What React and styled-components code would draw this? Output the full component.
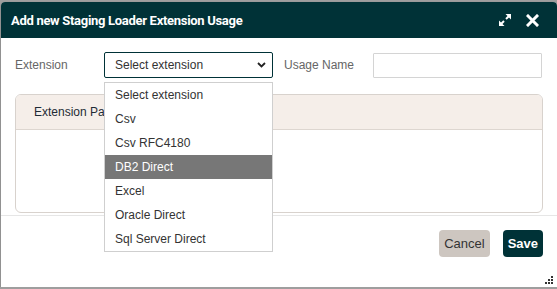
import React from "react";
import styled, { createGlobalStyle } from "styled-components";

const GlobalStyle = createGlobalStyle`
  html, body {
    margin: 0;
    padding: 0;
    background: #9e9e9e;
    overflow: hidden;
  }
  * { box-sizing: border-box; }
`;

const extensions = [
  "Select extension",
  "Csv",
  "Csv RFC4180",
  "DB2 Direct",
  "Excel",
  "Oracle Direct",
  "Sql Server Direct",
];

const ExpandIcon = () => (
  <svg width="14" height="14" viewBox="0 0 14 14">
    <polygon points="13,1 13,6.5 7.5,1" fill="#fff" />
    <line x1="11" y1="3" x2="8" y2="6" stroke="#fff" strokeWidth="2" />
    <polygon points="1,13 1,7.5 6.5,13" fill="#fff" />
    <line x1="3" y1="11" x2="6" y2="8" stroke="#fff" strokeWidth="2" />
  </svg>
);

const CloseIcon = () => (
  <svg width="13" height="13" viewBox="0 0 13 13">
    <path d="M2 2 L11 11 M11 2 L2 11" stroke="#fff" strokeWidth="3" strokeLinecap="square" />
  </svg>
);

const Chevron = () => (
  <svg width="9" height="6" viewBox="0 0 9 6">
    <polyline points="1,1 4.5,4.5 8,1" fill="none" stroke="#222" strokeWidth="1.8" />
  </svg>
);

const Grip = () => (
  <svg width="11" height="9" viewBox="0 0 11 9">
    <rect x="8" y="0" width="2" height="2" fill="#333" />
    <rect x="5" y="3" width="2" height="2" fill="#333" />
    <rect x="8" y="3" width="2" height="2" fill="#333" />
    <rect x="2" y="6" width="2" height="2" fill="#333" />
    <rect x="5" y="6" width="2" height="2" fill="#333" />
    <rect x="8" y="6" width="2" height="2" fill="#333" />
  </svg>
);

export default function App() {
  return (
    <>
      <GlobalStyle />
      <Dialog>
        <TitleBar>
          <Title>Add new Staging Loader Extension Usage</Title>
          <TitleActions>
            <IconButton><ExpandIcon /></IconButton>
            <IconButton><CloseIcon /></IconButton>
          </TitleActions>
        </TitleBar>

        <Body>
          <FormRow>
            <Label>Extension</Label>
            <SelectWrap>
              <SelectBox>
                <span>Select extension</span>
                <Chevron />
              </SelectBox>
              <OptionList>
                {extensions.map((name) => (
                  <Option key={name} $active={name === "DB2 Direct"}>{name}</Option>
                ))}
              </OptionList>
            </SelectWrap>
            <Label $offset>Usage Name</Label>
            <TextInput type="text" />
          </FormRow>

          <Panel>
            <PanelHeader>Extension Parameters</PanelHeader>
          </Panel>
        </Body>

        <Footer>
          <Button $variant="cancel">Cancel</Button>
          <Button $variant="save">Save</Button>
        </Footer>

        <ResizeGrip><Grip /></ResizeGrip>
      </Dialog>
    </>
  );
}

const Dialog = styled.div`
  position: relative;
  margin: 2px 0 0 1px;
  width: 556px;
  height: 285px;
  background: #fff;
  border-radius: 4px 4px 0 0;
  display: flex;
  flex-direction: column;
  font-family: "Liberation Sans", Arial, sans-serif;
  font-size: 12px;
  box-shadow: 0 1px 2px rgba(0, 0, 0, 0.3);
`;

const TitleBar = styled.div`
  height: 36px;
  flex-shrink: 0;
  display: flex;
  align-items: center;
  padding: 0 18px 0 10px;
  background: #003237;
  border-radius: 4px 4px 0 0;
  color: #fff;
`;

const Title = styled.div`
  font-family: Roboto, "Liberation Sans", sans-serif;
  font-weight: 700;
  font-size: 13px;
  letter-spacing: -0.3px;
`;

const TitleActions = styled.div`
  margin-left: auto;
  display: flex;
  align-items: center;
  gap: 14px;
`;

const IconButton = styled.span`
  display: flex;
  align-items: center;
  cursor: pointer;
`;

const Body = styled.div`
  padding: 14px 14px 2px;
`;

const FormRow = styled.div`
  display: flex;
  align-items: center;
  height: 26px;
`;

const Label = styled.label`
  width: 89px;
  margin-left: ${(p) => (p.$offset ? "11px" : "0")};
  color: #666;
`;

const SelectWrap = styled.div`
  position: relative;
  width: 169px;
`;

const SelectBox = styled.div`
  height: 26px;
  border: 1px solid #003237;
  border-radius: 2px;
  display: flex;
  align-items: center;
  justify-content: space-between;
  padding: 0 6px 0 10px;
  color: #333;
`;

const OptionList = styled.div`
  position: absolute;
  top: 30px;
  left: 0;
  width: 169px;
  background: #fff;
  border: 1px solid #cfcfcf;
  z-index: 10;
`;

const Option = styled.div`
  height: 24px;
  display: flex;
  align-items: center;
  padding-left: 10px;
  color: ${(p) => (p.$active ? "#fff" : "#333")};
  background: ${(p) => (p.$active ? "#777" : "transparent")};
`;

const TextInput = styled.input`
  width: 169px;
  height: 25px;
  border: 1px solid #d4d4d4;
  border-radius: 1px;
  outline: none;
`;

const Panel = styled.div`
  margin-top: 16px;
  height: 119px;
  border: 1px solid #d8d2cd;
  border-radius: 6px;
  overflow: hidden;
`;

const PanelHeader = styled.div`
  height: 35px;
  display: flex;
  align-items: center;
  padding-left: 18px;
  background: #f5eee9;
  border-bottom: 1px solid #ddd6d0;
  color: #1e2b36;
`;

const Footer = styled.div`
  border-top: 1px solid #e6e6e6;
  display: flex;
  justify-content: flex-end;
  gap: 13px;
  padding: 14px 14px 0;
`;

const Button = styled.button`
  height: 27px;
  padding: 0 5px;
  border: none;
  border-radius: 4px;
  font-family: "Liberation Sans", Arial, sans-serif;
  font-size: 13px;
  cursor: pointer;
  font-weight: ${(p) => (p.$variant === "save" ? 700 : 400)};
  color: ${(p) => (p.$variant === "save" ? "#fff" : "#333")};
  background: ${(p) => (p.$variant === "save" ? "#003237" : "#cdc6c0")};
`;

const ResizeGrip = styled.div`
  position: absolute;
  right: 3px;
  bottom: 2px;
  display: flex;
`;
